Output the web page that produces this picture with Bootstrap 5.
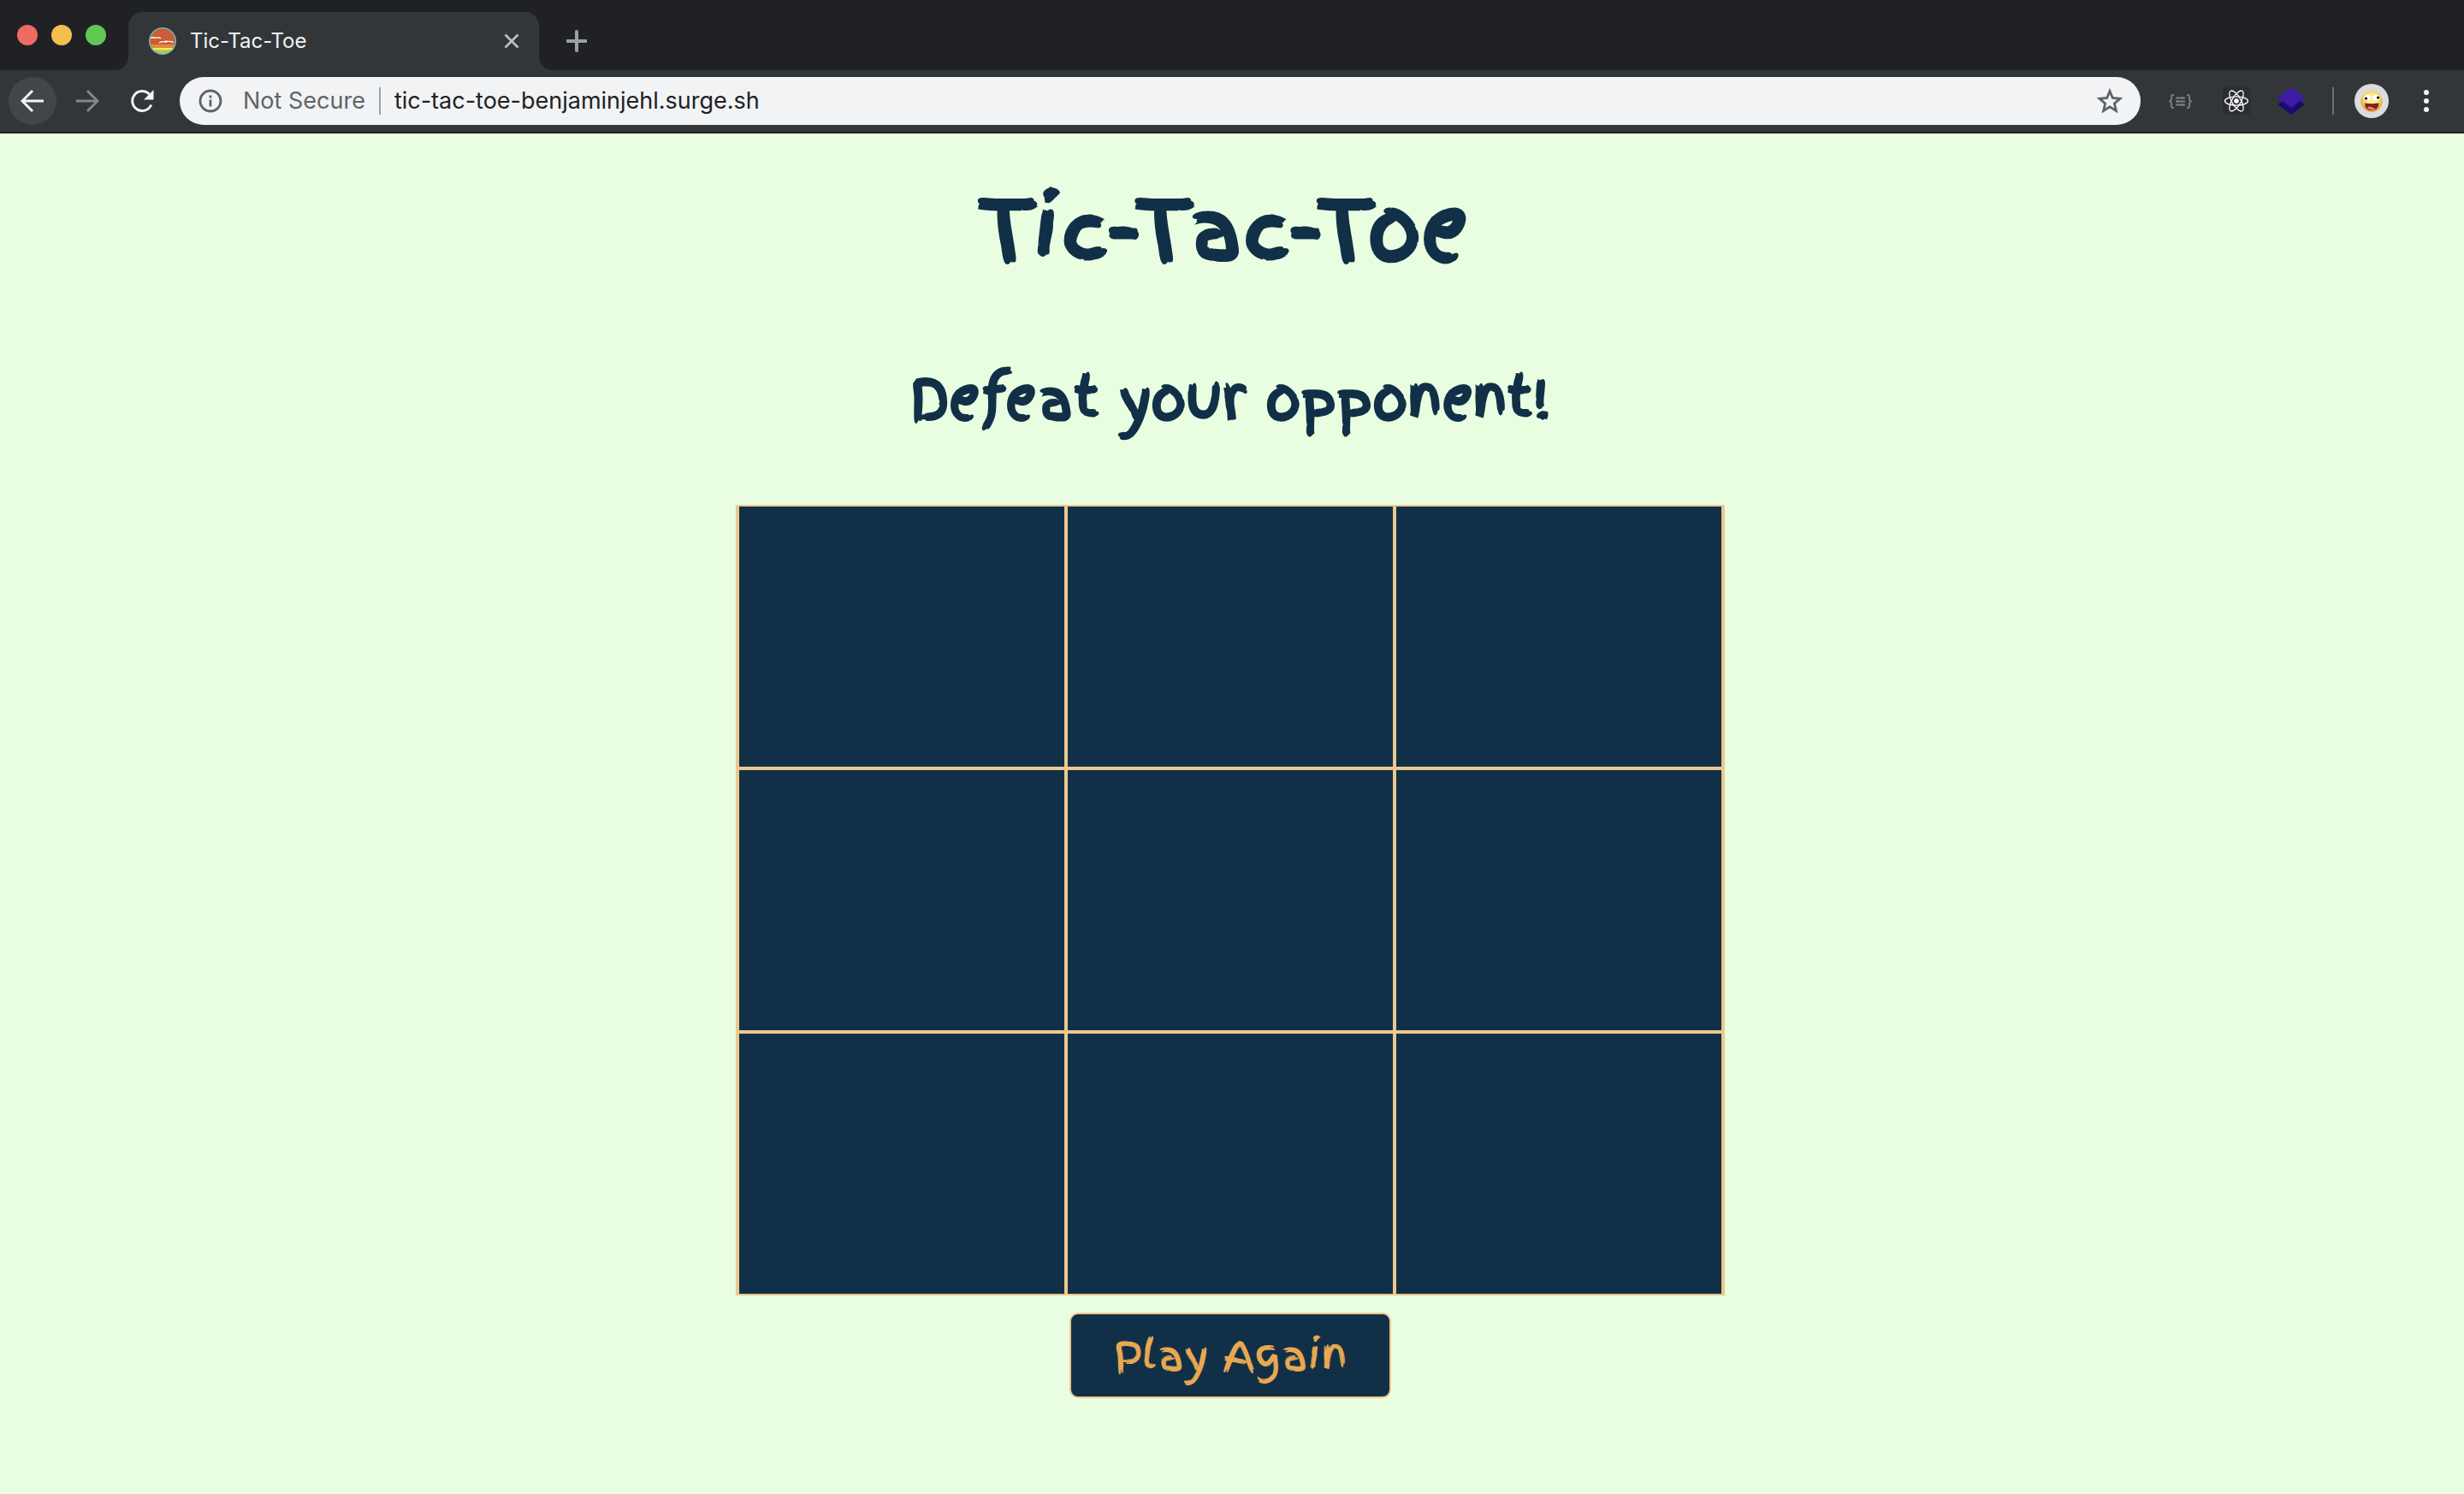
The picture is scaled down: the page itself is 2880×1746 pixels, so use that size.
<!DOCTYPE html>
<html lang="en">
<head>
<meta charset="utf-8">
<meta name="viewport" content="width=device-width, initial-scale=1">
<title>Tic-Tac-Toe</title>
<link href="https://cdn.jsdelivr.net/npm/bootstrap@5.3.0/dist/css/bootstrap.min.css" rel="stylesheet">
<style>
  body { background: #e9fee1; color: #113047; font-family: Inter, "Liberation Sans", sans-serif; }
  svg { display: block; flex-shrink: 0; }
  button { flex-shrink: 0; }
  .bare { background: none; border: 0; padding: 0; }

  /* browser window */
  .tab-strip { background: #202124; height: 82px; padding-left: 20px; }
  .light { width: 24px; height: 24px; border-radius: 50%; }
  .light-close { background: #ed6b60; }
  .light-min { background: #f5bf4f; }
  .light-max { background: #62c655; }
  .window-lights { gap: 16px; height: 82px; width: 130px; }
  .page-tab { position: relative; width: 480px; height: 68px; padding: 0 22px 0 24px; gap: 16px; background: #323639; border-radius: 16px 16px 0 0; color: #f1f3f4; font-size: 24px; line-height: 32px; }
  .page-tab::before, .page-tab::after { content: ""; position: absolute; bottom: 0; width: 16px; height: 16px; }
  .page-tab::before { right: 100%; background: radial-gradient(circle at 0 0, transparent 16px, #323639 16px); }
  .page-tab::after { left: 100%; background: radial-gradient(circle at 100% 0, transparent 16px, #323639 16px); }
  .new-tab { margin: 22px 0 0 32px; }
  .tool-row { background: #323639; height: 74px; padding: 0 28px 0 10px; border-bottom: 2px solid #202124; }
  .nav-round { width: 56px; height: 56px; border-radius: 50%; }
  .nav-round.current { background: #434649; }
  .address { height: 56px; border-radius: 28px; background: #f1f3f4; padding: 0 20px 0 22px; margin: 0 32px 0 16px; font-size: 27px; line-height: 36px; color: #5f6368; }
  .address input { color: #202124; outline: 0; min-width: 0; }
  .rule { width: 2px; height: 32px; background: #9aa0a6; }
  .rule-dim { background: #6b6e70; }
  .extensions { gap: 32px; }
  .profile { gap: 28px; }

  /* game */
  .game { padding-right: 4px; }
  .hand { font-family: "Finger Paint", "Caveat Brush", Lato, sans-serif; }
  .game-title { font-size: 96px; line-height: 128px; font-weight: 700; margin: 48px 0 0; padding-right: 16px; }
  .game-status { font-size: 64px; line-height: 96px; font-weight: 700; margin: 86px 0 0; }
  .board { box-sizing: content-box; width: 40vw; margin-top: 76px; border: solid #ecc88f; border-width: 0 2px; }
  .square { display: block; width: 100%; height: 308px; background: #113047; border: 2px solid #ecc88f; padding: 0; }
  .again { width: 376px; height: 100px; margin: 20px 0 48px; padding: 0; border: 2px solid #ecc88f; border-radius: 10px; background: #113047; color: #e8a951; font-size: 48px; line-height: 64px; }
</style>
</head>
<body>
<header>
  <div class="tab-strip d-flex align-items-end">
    <div class="window-lights d-flex align-items-center">
      <button class="light light-close border-0 p-0" aria-label="Close window"></button>
      <button class="light light-min border-0 p-0" aria-label="Minimise window"></button>
      <button class="light light-max border-0 p-0" aria-label="Zoom window"></button>
    </div>
    <div class="page-tab d-flex align-items-center">
      <svg width="32" height="32" viewBox="0 0 32 32" aria-hidden="true">
        <clipPath id="disc"><circle cx="16" cy="16" r="14.5"/></clipPath>
        <circle cx="16" cy="16" r="16" fill="#72b4bb"/>
        <g clip-path="url(#disc)"><path fill="#cb5c35" d="M0 0h32v21H0z"/><path fill="#de8a3c" d="M0 20h32v4H0z"/><path fill="#f8ea4b" d="M0 24h32v2.500H0z"/><path fill="#b6c64e" d="M0 26.500h32V32H0z"/></g>
        <path fill="none" stroke="#fff" stroke-width="1.300" d="M2 12.500q3-1.500 6 0 3-1.500 6 .5M12 18q4-2 8-1 4-1.500 9 .5M19 17l2-1.500"/>
      </svg>
      <span class="flex-grow-1">Tic-Tac-Toe</span>
      <button class="bare" aria-label="Close tab"><svg width="20" height="20" viewBox="0 0 20 20"><path d="m2.500 2.500 15 15m0-15-15 15" stroke="#bdc1c6" stroke-width="2.600"/></svg></button>
    </div>
    <button class="bare new-tab align-self-start" aria-label="New tab"><svg width="24" height="52" viewBox="0 0 24 52"><path d="M12 15v22M1 26h22" stroke="#9aa0a3" stroke-width="4" stroke-linecap="round"/></svg></button>
  </div>

  <nav class="tool-row d-flex align-items-center" aria-label="Browser">
    <div class="d-flex gap-2">
      <button class="bare nav-round current d-flex align-items-center justify-content-center" aria-label="Back"><svg width="28" height="28" viewBox="0 0 28 28"><path d="M27 14H3M14 2 2 14l12 12" fill="none" stroke="#f1f3f4" stroke-width="3"/></svg></button>
      <button class="bare nav-round d-flex align-items-center justify-content-center" aria-label="Forward"><svg width="28" height="28" viewBox="0 0 28 28"><path d="M1 14h24M14 2l12 12-12 12" fill="none" stroke="#84878a" stroke-width="3"/></svg></button>
      <button class="bare nav-round d-flex align-items-center justify-content-center" aria-label="Reload"><svg width="28" height="28" viewBox="0 0 28 28"><path d="M24.800 18.500A11.500 11.500 0 1 1 22.500 6" fill="none" stroke="#f1f3f4" stroke-width="3"/><path d="M27.500 1v11.500H16z" fill="#f1f3f4"/></svg></button>
    </div>
    <div class="address d-flex align-items-center flex-grow-1">
      <svg width="28" height="28" viewBox="0 0 28 28" aria-hidden="true"><circle cx="14" cy="14" r="12" fill="none" stroke="#5f6368" stroke-width="2.800"/><path d="M14 12.500v8M14 7.500v3" stroke="#5f6368" stroke-width="2.800"/></svg>
      <label for="url" class="ms-4 me-3 text-nowrap">Not Secure</label>
      <span class="rule me-3"></span>
      <input id="url" class="bare flex-grow-1" type="text" value="tic-tac-toe-benjaminjehl.surge.sh">
      <button class="bare" aria-label="Bookmark"><svg width="32" height="32" viewBox="0 0 32 32"><path d="m16 4.500 3.300 8 8.700.8-6.600 5.700 2 8.500-7.400-4.600-7.400 4.600 2-8.500L4 13.300l8.700-.8z" fill="none" stroke="#5f6368" stroke-width="2.800"/></svg></button>
    </div>
    <div class="extensions d-flex align-items-center">
      <button class="bare me-1" aria-label="JSON viewer"><svg width="28" height="32" viewBox="0 0 28 32"><path d="M7 9H6q-2 0-2 2v3q0 2-2.500 2.500Q4 17 4 19v3q0 2 2 2h1M22 9h1q2 0 2 2v3q0 2 2.500 2.500Q25 17 25 19v3q0 2-2 2h-1M9 12.500h11M9 16.500h11M9 20.500h11M16.500 11v3M11.500 15v3M16.500 19v3" fill="none" stroke="#7d8082" stroke-width="1.900"/></svg></button>
      <button class="bare" aria-label="React tools"><svg width="32" height="32" viewBox="0 0 32 32"><rect width="32" height="32" rx="2" fill="#2b2d30"/><g fill="none" stroke="#fff" stroke-width="1.300"><ellipse cx="16" cy="16" rx="13.500" ry="5.200"/><ellipse cx="16" cy="16" rx="13.500" ry="5.200" transform="rotate(60 16 16)"/><ellipse cx="16" cy="16" rx="13.500" ry="5.200" transform="rotate(120 16 16)"/></g><circle cx="16" cy="16" r="2.800" fill="#fff"/></svg></button>
      <button class="bare" aria-label="Layers"><svg width="32" height="32" viewBox="0 0 32 32"><path d="m16 8 16 12-16 12L0 20z" fill="#1b0a70"/><path d="m16 0 16 12-16 12L0 12z" fill="#3e1aa6"/></svg></button>
      <span class="rule rule-dim"></span>
    </div>
    <div class="profile d-flex align-items-center ms-4">
      <button class="bare" aria-label="Profile"><svg width="40" height="40" viewBox="0 0 40 40">
        <defs><radialGradient id="face" cy=".4"><stop offset=".3" stop-color="#fdf0a0"/><stop offset=".8" stop-color="#f9d35c"/><stop offset="1" stop-color="#e5a93c"/></radialGradient></defs>
        <circle cx="20" cy="20" r="20" fill="#dcdcdc"/><circle cx="20" cy="20.500" r="12.500" fill="url(#face)"/>
        <ellipse cx="15" cy="16" rx="3.800" ry="3.500" fill="#fff"/><ellipse cx="25" cy="16" rx="3.800" ry="3.500" fill="#fff"/><circle cx="13.500" cy="17" r="1.600"/><circle cx="27.500" cy="16" r="1.600"/>
        <path d="M12 22.500q8 1.500 16.500 0Q28 31 20 31t-8-8.500z" fill="#7c2016"/><path d="M14.500 28q3-3 7.500 0l3 1.500Q20 32 14.500 28z" fill="#ee7f83"/></svg></button>
      <button class="bare" aria-label="Menu"><svg width="32" height="32" viewBox="0 0 32 32" fill="#f1f3f4"><circle cx="16" cy="6" r="3"/><circle cx="16" cy="16" r="3"/><circle cx="16" cy="26" r="3"/></svg></button>
    </div>
  </nav>
</header>

<main class="game d-flex flex-column align-items-center text-center">
  <h1 class="game-title hand">Tic-Tac-Toe</h1>
  <h2 class="game-status hand">Defeat your opponent!</h2>
  <div class="board">
    <div class="row g-0">
      <div class="col-4"><button class="square" aria-label="Square 1"></button></div>
      <div class="col-4"><button class="square" aria-label="Square 2"></button></div>
      <div class="col-4"><button class="square" aria-label="Square 3"></button></div>
      <div class="col-4"><button class="square" aria-label="Square 4"></button></div>
      <div class="col-4"><button class="square" aria-label="Square 5"></button></div>
      <div class="col-4"><button class="square" aria-label="Square 6"></button></div>
      <div class="col-4"><button class="square" aria-label="Square 7"></button></div>
      <div class="col-4"><button class="square" aria-label="Square 8"></button></div>
      <div class="col-4"><button class="square" aria-label="Square 9"></button></div>
    </div>
  </div>
  <button class="btn again hand">Play Again</button>
</main>
<script src="https://cdn.jsdelivr.net/npm/bootstrap@5.3.0/dist/js/bootstrap.bundle.min.js"></script>
</body>
</html>
